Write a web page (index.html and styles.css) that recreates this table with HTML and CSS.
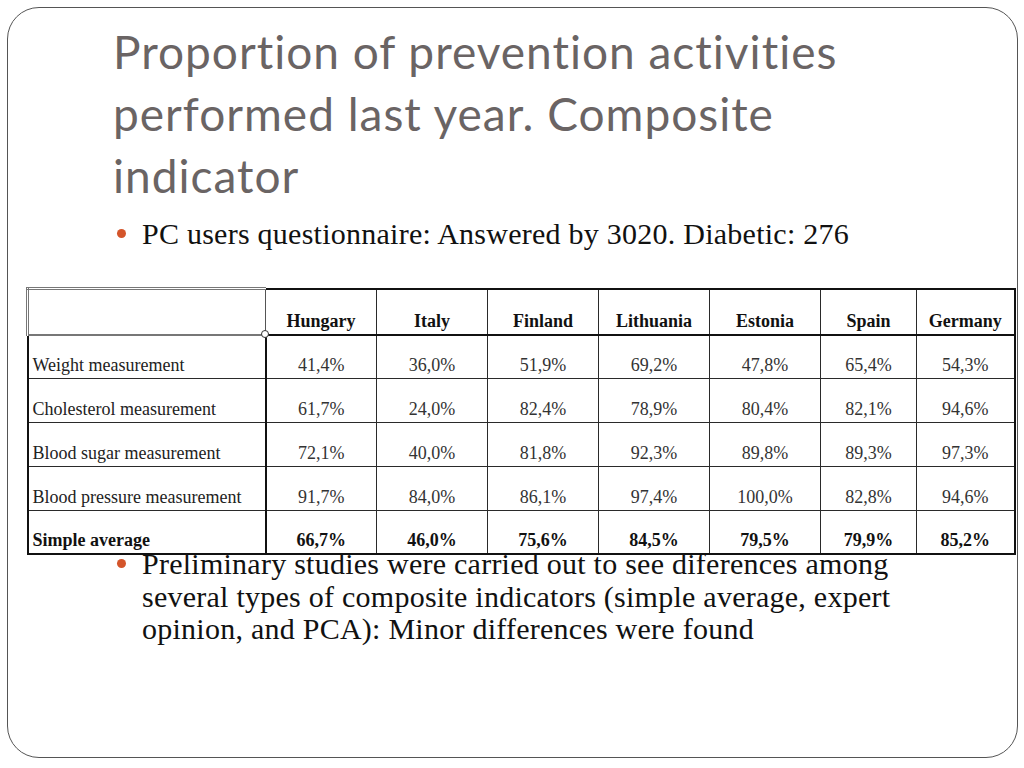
FILE: index.html
```html
<!DOCTYPE html>
<html>
<head>
<meta charset="utf-8">
<link rel="stylesheet" href="styles.css">
</head>
<body>
<div class="slide">
  <h1 class="title">Proportion of prevention activities<br>performed last year. Composite<br>indicator</h1>
  <ul class="bullets">
    <li class="b1">PC users questionnaire: Answered by 3020. Diabetic: 276</li>
    <li class="b2">Preliminary studies were carried out to see diferences among<br>several types of composite indicators (simple average, expert<br>opinion, and PCA): Minor differences were found</li>
  </ul>
  <div class="table-wrap">
    <table class="data">
      <colgroup>
        <col class="c-label"><col class="c-w"><col class="c-w"><col class="c-w"><col class="c-w"><col class="c-w"><col class="c-s"><col class="c-g">
      </colgroup>
      <thead>
        <tr>
          <th class="corner"></th>
          <th>Hungary</th><th>Italy</th><th>Finland</th><th>Lithuania</th><th>Estonia</th><th>Spain</th><th>Germany</th>
        </tr>
      </thead>
      <tbody>
        <tr><td class="lbl">Weight measurement</td><td>41,4%</td><td>36,0%</td><td>51,9%</td><td>69,2%</td><td>47,8%</td><td>65,4%</td><td>54,3%</td></tr>
        <tr><td class="lbl">Cholesterol measurement</td><td>61,7%</td><td>24,0%</td><td>82,4%</td><td>78,9%</td><td>80,4%</td><td>82,1%</td><td>94,6%</td></tr>
        <tr><td class="lbl">Blood sugar measurement</td><td>72,1%</td><td>40,0%</td><td>81,8%</td><td>92,3%</td><td>89,8%</td><td>89,3%</td><td>97,3%</td></tr>
        <tr><td class="lbl">Blood pressure measurement</td><td>91,7%</td><td>84,0%</td><td>86,1%</td><td>97,4%</td><td>100,0%</td><td>82,8%</td><td>94,6%</td></tr>
        <tr class="avg"><td class="lbl">Simple average</td><td>66,7%</td><td>46,0%</td><td>75,6%</td><td>84,5%</td><td>79,5%</td><td>79,9%</td><td>85,2%</td></tr>
      </tbody>
    </table>
    <span class="handle"></span>
  </div>
</div>
</body>
</html>
```

FILE: styles.css
```css
html, body {
  margin: 0;
  padding: 0;
  background: #ffffff;
}

.slide {
  position: relative;
  box-sizing: border-box;
  width: 1011px;
  height: 751px;
  margin: 7px 0 0 7px;
  border: 1.5px solid #555555;
  border-radius: 32px;
  background: #ffffff;
  overflow: hidden;
}

.title {
  margin: 13px 0 0 105px;
  font-family: Lato, "Liberation Sans", sans-serif;
  font-weight: 400;
  font-size: 46px;
  line-height: 62px;
  letter-spacing: 1px;
  font-variant-ligatures: none;
  color: #6a6464;
}

.bullets {
  list-style: none;
  margin: 0;
  padding: 0 0 0 134px;
  font-family: "Liberation Serif", serif;
  font-size: 30px;
  letter-spacing: 0.25px;
  color: #111111;
}

.bullets li {
  position: relative;
}

.bullets li::before {
  content: "";
  position: absolute;
  left: -25px;
  width: 9px;
  height: 9px;
  border-radius: 50%;
  background: #d4552b;
}

.b1 {
  margin-top: 9px;
  line-height: 36px;
}

.b1::before {
  top: 13px;
}

.b2 {
  margin-top: 296px;
  line-height: 32.5px;
}

.b2::before {
  top: 11px;
}

.table-wrap {
  position: absolute;
  left: 18px;
  top: 279px;
  width: 976px;
  height: 267px;
  background: #ffffff;
}

.data {
  border-collapse: collapse;
  table-layout: fixed;
  width: 976px;
  height: 267px;
  font-family: "Liberation Serif", serif;
  font-size: 18px;
  color: #333333;
}

.c-label { width: 238px; }
.c-w { width: 111px; }
.c-s { width: 96px; }
.c-g { width: 98px; }

.data th,
.data td {
  border: 1px solid #2a2a2a;
  text-align: center;
  vertical-align: bottom;
  padding: 0 2px 2px;
  white-space: nowrap;
}

.data thead tr { height: 46px; }
.data tbody tr { height: 44px; }
.data tbody tr.avg { height: 43px; }

.data th {
  font-weight: 700;
  color: #111111;
  border-top: 2px solid #111111;
  border-bottom: 2px solid #111111;
}

.data th:last-child,
.data td:last-child {
  border-right: 2px solid #111111;
}

.data th.corner {
  border-top: 3px double #777777;
  border-left: 3px double #777777;
  border-bottom: 2px solid #777777;
  border-right: 1px solid #555555;
}

.data td.lbl {
  text-align: left;
  padding-left: 4px;
  color: #222222;
  border-left: 2px solid #111111;
  border-right: 2px solid #111111;
}

.data tr.avg td {
  font-weight: 700;
  color: #111111;
  border-bottom: 2px solid #111111;
}

.handle {
  position: absolute;
  left: 235px;
  top: 43px;
  width: 6px;
  height: 6px;
  border: 1px solid #333333;
  border-radius: 50%;
  background: #ffffff;
}
```
